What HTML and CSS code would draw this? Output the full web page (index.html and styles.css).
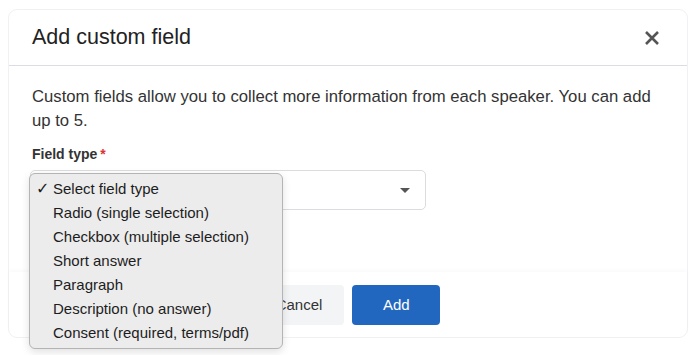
FILE: index.html
```html
<!DOCTYPE html>
<html lang="en">
<head>
    <meta charset="UTF-8">
    <title>Add custom field</title>
    <link rel="stylesheet" href="styles.css">
</head>
<body>
    <div class="modal">
        <div class="modal-header">
            <h2>Add custom field</h2>
            <button class="close-btn" aria-label="Close">
                <svg width="16" height="16" viewBox="0 0 16 16">
                    <path d="M2 2 L14 14 M14 2 L2 14" stroke="#555" stroke-width="2.6" stroke-linecap="butt"/>
                </svg>
            </button>
        </div>

        <div class="modal-body">
            <p class="description">Custom fields allow you to collect more information from each speaker. You can add up to 5.</p>

            <label class="field-label">Field type<span class="required">*</span></label>
            <div class="select-wrap">
                <div class="select-box">
                    <span class="caret"></span>
                </div>

                <ul class="options">
                    <li class="selected"><span class="check">✓</span>Select field type</li>
                    <li>Radio (single selection)</li>
                    <li>Checkbox (multiple selection)</li>
                    <li>Short answer</li>
                    <li>Paragraph</li>
                    <li>Description (no answer)</li>
                    <li>Consent (required, terms/pdf)</li>
                </ul>
            </div>
        </div>

        <div class="modal-footer">
            <button class="btn btn-cancel">Cancel</button>
            <button class="btn btn-add">Add</button>
        </div>
    </div>
</body>
</html>
```

FILE: styles.css
```css
* {
    margin: 0;
    padding: 0;
    box-sizing: border-box;
    font-family: 'Liberation Sans', Arial, sans-serif;
}

html, body {
    min-height: 100vh;
}

body {
    background: #fff;
    padding: 9px 8px 0 8px;
}

.modal {
    width: 680px;
    height: 329px;
    background: #fff;
    border: 1px solid #f1f1f3;
    border-radius: 9px;
    display: flex;
    flex-direction: column;
}

.modal-header {
    height: 56px;
    flex-shrink: 0;
    border-bottom: 1px solid #dcdce2;
    display: flex;
    align-items: center;
    justify-content: space-between;
    padding: 0 27px 0 23px;
}

.modal-header h2 {
    font-size: 21.5px;
    font-weight: 400;
    color: #222;
}

.close-btn {
    background: none;
    border: none;
    display: flex;
    cursor: pointer;
}

.modal-body {
    flex: 1;
    padding: 19px 23px 0 23px;
}

.description {
    font-size: 16.7px;
    line-height: 24px;
    color: #333;
    margin-bottom: 11px;
}

.field-label {
    display: block;
    font-size: 14px;
    font-weight: 700;
    color: #333;
    line-height: 20px;
    margin-bottom: 6px;
}

.required {
    color: #d33;
    margin-left: 3px;
}

.select-wrap {
    position: relative;
    margin-left: -2px;
}

.select-box {
    width: 396px;
    height: 40px;
    border: 1px solid #dcdce0;
    border-radius: 5px;
    background: #fff;
    display: flex;
    align-items: center;
    justify-content: flex-end;
    padding-right: 15px;
}

.caret {
    width: 0;
    height: 0;
    border-left: 5px solid transparent;
    border-right: 5px solid transparent;
    border-top: 5px solid #555;
}

.options {
    position: absolute;
    top: 3px;
    left: -1px;
    width: 254px;
    list-style: none;
    background: #ececec;
    border: 1px solid #b4b4b4;
    border-radius: 6px;
    padding: 3px 0 3px 0;
    box-shadow: 0 3px 8px rgba(0, 0, 0, 0.12);
    z-index: 10;
}

.options li {
    height: 24px;
    line-height: 24px;
    font-size: 15px;
    color: #1d1d1d;
    padding-left: 23px;
    position: relative;
}

.options .check {
    position: absolute;
    left: 6px;
    font-size: 16px;
    font-weight: 700;
    font-family: 'DejaVu Sans', sans-serif;
}

.modal-footer {
    height: 65px;
    flex-shrink: 0;
    display: flex;
    justify-content: center;
    align-items: center;
    gap: 8px;
    padding-right: 2px;
    box-shadow: 0 -2px 4px rgba(0, 0, 0, 0.025);
    border-radius: 0 0 9px 9px;
}

.btn {
    height: 40px;
    border: none;
    border-radius: 4px;
    font-size: 15px;
    padding: 0 22px;
    cursor: pointer;
}

.btn-cancel {
    background: #f3f4f6;
    color: #333;
}

.btn-add {
    background: #2167c0;
    color: #fff;
    width: 88px;
}
```
